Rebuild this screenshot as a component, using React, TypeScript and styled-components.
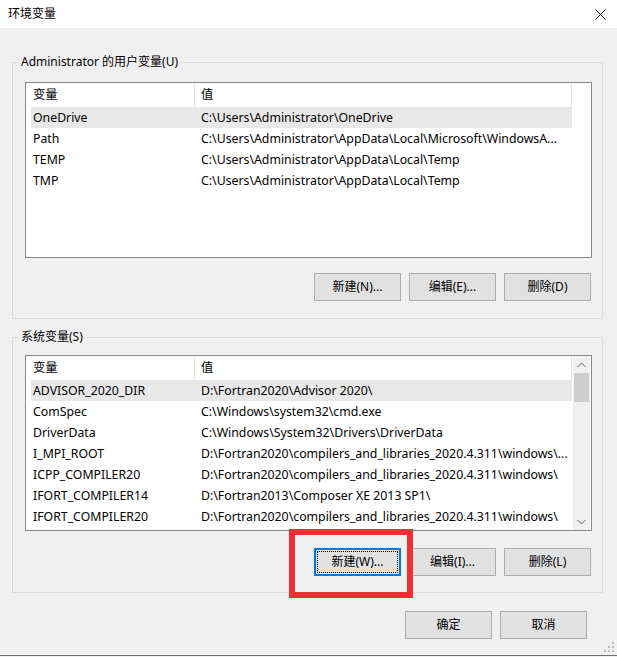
import React from "react";
import styled, { createGlobalStyle, css } from "styled-components";

const Global = createGlobalStyle`
  html, body { margin: 0; padding: 0; background: #f0f0f0; }
  body {
    font-family: "Noto Sans", "Noto Sans CJK SC", sans-serif;
    font-size: 12px;
    color: #000;
  }
  * { box-sizing: border-box; }
`;

const Window = styled.div`
  position: relative;
  width: 617px;
  height: 656px;
  background: #f0f0f0;
  border-bottom: 1px solid #6e6e6e;
  display: flex;
  flex-direction: column;
  overflow: hidden;
`;

const TitleBar = styled.div`
  height: 28px;
  flex: none;
  background: #fff;
  display: flex;
  align-items: center;
  justify-content: space-between;
  padding: 0 11px 0 8px;
`;

const Title = styled.span`
  font-size: 12px;
  line-height: 16px;
`;

const Body = styled.div`
  padding: 0 14px 0 12px;
  display: flex;
  flex-direction: column;
`;

const Group = styled.fieldset<{ $mt: number; $pt: number; $gap: number; $pb: number }>`
  margin: ${(p) => p.$mt}px 0 0 0;
  padding: ${(p) => p.$pt}px 10px ${(p) => p.$pb}px 12px;
  border: 1px solid #dcdcdc;
  min-width: 0;
  display: flex;
  flex-direction: column;
  gap: ${(p) => p.$gap}px;
`;

const Legend = styled.legend`
  margin-left: -7px;
  padding: 0 3px;
  font-size: 12px;
  line-height: 16px;
  white-space: nowrap;
`;

const ListView = styled.div<{ $scroll?: boolean }>`
  height: 176px;
  background: #fff;
  border: 1px solid #828790;
  display: flex;
  padding-right: ${(p) => (p.$scroll ? 1 : 0)}px;
`;

const ListBody = styled.div`
  flex: 1;
  padding-left: 5px;
  overflow: hidden;
`;

const Row = styled.div<{ $head?: boolean; $sel?: boolean }>`
  width: 541px;
  height: ${(p) => (p.$head ? 24 : 21)}px;
  display: grid;
  grid-template-columns: 163px 378px;
  align-items: stretch;
  background: ${(p) => (p.$sel ? "#e8e8e8" : "transparent")};
`;

const Cell = styled.div<{ $second?: boolean; $head?: boolean }>`
  display: flex;
  align-items: center;
  white-space: nowrap;
  overflow: hidden;
  font-size: 12.3px;
  line-height: 16px;
  padding-left: ${(p) => (p.$second ? 6 : 2)}px;
  border-left: ${(p) => (p.$second ? 1 : 0)}px solid
    ${(p) => (p.$head ? "#e5e5e5" : "transparent")};
  ${(p) =>
    p.$head &&
    p.$second &&
    css`
      border-right: 1px solid #e5e5e5;
    `}
`;

const ScrollBar = styled.div`
  width: 17px;
  flex: none;
  background: #f0f0f0;
  display: flex;
  flex-direction: column;
`;

const ScrollArrow = styled.div`
  height: 17px;
  display: flex;
  align-items: center;
  justify-content: center;
`;

const Thumb = styled.div`
  height: 29px;
  margin: 0 1px;
  background: #cdcdcd;
`;

const Track = styled.div`
  flex: 1;
`;

const ButtonRow = styled.div<{ $pr?: number }>`
  display: flex;
  justify-content: flex-end;
  gap: 8px;
  padding-right: ${(p) => p.$pr ?? 0}px;
`;

const Button = styled.button<{ $focus?: boolean }>`
  width: 87px;
  height: 28px;
  padding: 0;
  background: #e1e1e1;
  border: 1px solid #adadad;
  font-family: inherit;
  font-size: 12px;
  color: #000;
  line-height: 16px;
  ${(p) =>
    p.$focus &&
    css`
      border: 2px solid #0078d7;
      outline: 1px dotted #000;
      outline-offset: -4px;
    `}
`;

const Footer = styled.div`
  margin-top: 18px;
  display: flex;
  justify-content: flex-end;
  gap: 8px;
  padding-right: 30px;
`;

const Highlight = styled.div`
  position: absolute;
  left: 289px;
  top: 529px;
  width: 124px;
  height: 69px;
  border: 6px solid #ee2f36;
  pointer-events: none;
`;

const Grip = styled.svg`
  position: absolute;
  right: 3px;
  bottom: 3px;
`;

type Entry = [string, string];

const userVars: Entry[] = [
  ["OneDrive", "C:\\Users\\Administrator\\OneDrive"],
  ["Path", "C:\\Users\\Administrator\\AppData\\Local\\Microsoft\\WindowsA..."],
  ["TEMP", "C:\\Users\\Administrator\\AppData\\Local\\Temp"],
  ["TMP", "C:\\Users\\Administrator\\AppData\\Local\\Temp"],
];

const sysVars: Entry[] = [
  ["ADVISOR_2020_DIR", "D:\\Fortran2020\\Advisor 2020\\"],
  ["ComSpec", "C:\\Windows\\system32\\cmd.exe"],
  ["DriverData", "C:\\Windows\\System32\\Drivers\\DriverData"],
  ["I_MPI_ROOT", "D:\\Fortran2020\\compilers_and_libraries_2020.4.311\\windows\\..."],
  ["ICPP_COMPILER20", "D:\\Fortran2020\\compilers_and_libraries_2020.4.311\\windows\\"],
  ["IFORT_COMPILER14", "D:\\Fortran2013\\Composer XE 2013 SP1\\"],
  ["IFORT_COMPILER20", "D:\\Fortran2020\\compilers_and_libraries_2020.4.311\\windows\\"],
];

function VarList({ rows, scroll }: { rows: Entry[]; scroll?: boolean }) {
  return (
    <ListView $scroll={scroll}>
      <ListBody>
        <Row $head>
          <Cell $head>变量</Cell>
          <Cell $head $second>
            值
          </Cell>
        </Row>
        {rows.map(([k, v], i) => (
          <Row key={k} $sel={i === 0}>
            <Cell>{k}</Cell>
            <Cell $second>{v}</Cell>
          </Row>
        ))}
      </ListBody>
      {scroll && (
        <ScrollBar>
          <ScrollArrow>
            <svg width="9" height="6" viewBox="0 0 9 6">
              <polyline points="0.5,5 4.5,1 8.5,5" fill="none" stroke="#606060" strokeWidth="1" />
            </svg>
          </ScrollArrow>
          <Thumb />
          <Track />
          <ScrollArrow>
            <svg width="9" height="6" viewBox="0 0 9 6">
              <polyline points="0.5,1 4.5,5 8.5,1" fill="none" stroke="#606060" strokeWidth="1" />
            </svg>
          </ScrollArrow>
        </ScrollBar>
      )}
    </ListView>
  );
}

export default function App() {
  return (
    <>
      <Global />
      <Window>
        <TitleBar>
          <Title>环境变量</Title>
          <svg width="11" height="11" viewBox="0 0 11 11">
            <line x1="0.5" y1="0.5" x2="10.5" y2="10.5" stroke="#000" strokeWidth="1" />
            <line x1="10.5" y1="0.5" x2="0.5" y2="10.5" stroke="#000" strokeWidth="1" />
          </svg>
        </TitleBar>
        <Body>
          <Group $mt={26} $pt={12} $gap={15} $pb={17}>
            <Legend>Administrator 的用户变量(U)</Legend>
            <VarList rows={userVars} />
            <ButtonRow $pr={1}>
              <Button>新建(N)...</Button>
              <Button>编辑(E)...</Button>
              <Button>删除(D)</Button>
            </ButtonRow>
          </Group>
          <Group $mt={10} $pt={10} $gap={17} $pb={16}>
            <Legend>系统变量(S)</Legend>
            <VarList rows={sysVars} scroll />
            <ButtonRow $pr={1}>
              <Button $focus>新建(W)...</Button>
              <Button>编辑(I)...</Button>
              <Button>删除(L)</Button>
            </ButtonRow>
          </Group>
        </Body>
        <Footer>
          <Button>确定</Button>
          <Button>取消</Button>
        </Footer>
        <Highlight />
        <Grip width="10" height="10" viewBox="0 0 10 10">
          {[
            [8, 0],
            [8, 4],
            [4, 4],
            [8, 8],
            [4, 8],
            [0, 8],
          ].map(([x, y]) => (
            <rect key={`${x}-${y}`} x={x} y={y} width="2" height="2" fill="#bcbcbc" />
          ))}
        </Grip>
      </Window>
    </>
  );
}
